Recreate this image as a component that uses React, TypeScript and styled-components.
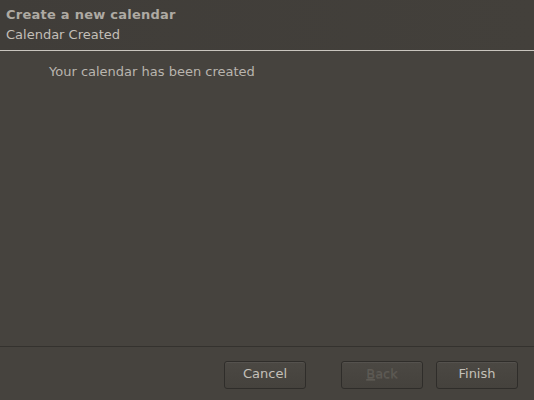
import styled, { createGlobalStyle } from "styled-components";

const GlobalStyle = createGlobalStyle`
  html, body {
    margin: 0;
    padding: 0;
    background: #46433e;
  }
  body {
    font-family: "DejaVu Sans", "Noto Sans", sans-serif;
  }
`;

const Dialog = styled.div`
  width: 534px;
  height: 400px;
  display: flex;
  flex-direction: column;
  background: #46433e;
  overflow: hidden;
`;

const Header = styled.div`
  height: 51px;
  flex-shrink: 0;
  box-sizing: border-box;
  padding: 7px 6px 0;
  background: linear-gradient(90deg, #403d39 0%, #43403b 100%);
  border-bottom: 1px solid #c9c5be;
  display: flex;
  flex-direction: column;
  gap: 4px;
`;

const Title = styled.div`
  font-size: 13px;
  font-weight: bold;
  letter-spacing: 0.25px;
  color: #aeaaa3;
  line-height: 16px;
`;

const Subtitle = styled.div`
  font-size: 13px;
  color: #c3bfb8;
  line-height: 16px;
`;

const Body = styled.div`
  flex: 1;
  padding: 13px 49px 0;
  font-size: 13px;
  color: #b9b5ae;
  line-height: 16px;
`;

const Footer = styled.div`
  height: 54px;
  flex-shrink: 0;
  box-sizing: border-box;
  border-top: 1px solid #34322e;
  display: flex;
  align-items: flex-start;
  justify-content: flex-end;
  padding: 14px 16px 0;
  gap: 13px;
`;

const Button = styled.button<{ $disabled?: boolean; $gapAfter?: number }>`
  width: 82px;
  height: 28px;
  box-sizing: border-box;
  border: 1px solid #2f2d2a;
  border-radius: 3px;
  background: linear-gradient(#4b4843, #45423d);
  box-shadow: inset 0 1px 0 rgba(255, 255, 255, 0.06);
  color: ${({ $disabled }) => ($disabled ? "#5d5a54" : "#c4c0b9")};
  font-family: "DejaVu Sans", "Noto Sans", sans-serif;
  font-size: 13px;
  margin-right: ${({ $gapAfter }) => ($gapAfter ? `${$gapAfter}px` : "0")};
  padding: 0 0 3px;
  text-shadow: ${({ $disabled }) => ($disabled ? "0 1px 0 #55524c" : "none")};
`;

const Mnemonic = styled.span`
  text-decoration: underline;
`;

export default function App() {
  return (
    <>
      <GlobalStyle />
      <Dialog>
        <Header>
          <Title>Create a new calendar</Title>
          <Subtitle>Calendar Created</Subtitle>
        </Header>
        <Body>Your calendar has been created</Body>
        <Footer>
          <Button $gapAfter={22}>Cancel</Button>
          <Button $disabled>
            <Mnemonic>B</Mnemonic>ack
          </Button>
          <Button>Finish</Button>
        </Footer>
      </Dialog>
    </>
  );
}
